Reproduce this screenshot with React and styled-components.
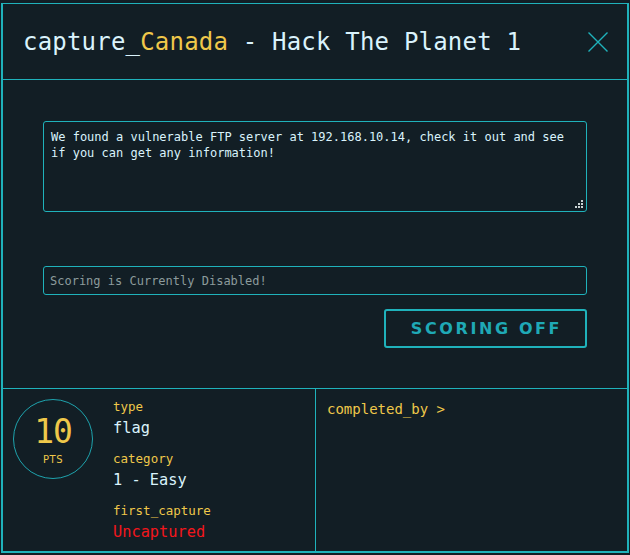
import styled, {createGlobalStyle} from 'styled-components';

const teal = '#1fb2bb';
const yellow = '#efc84a';
const light = '#daf3fc';
const bg = '#121e25';
const mono = '"DejaVu Sans Mono", "Liberation Mono", monospace';

const GlobalStyle = createGlobalStyle`
  html, body {
    margin: 0;
    background: ${bg};
  }
  * {
    box-sizing: border-box;
  }
`;

const Modal = styled.div`
  margin: 3px 0 0 1px;
  width: 628px;
  height: 550px;
  border: 2px solid ${teal};
  border-top-width: 1px;
  background: ${bg};
  display: flex;
  flex-direction: column;
  font-family: ${mono};
`;

const Header = styled.div`
  height: 76px;
  flex: none;
  display: flex;
  align-items: center;
  justify-content: space-between;
  padding: 0 19px 0 20px;
  border-bottom: 1px solid ${teal};
`;

const Title = styled.h1`
  margin: 0;
  font-size: 24px;
  font-weight: normal;
  letter-spacing: 0.2px;
  color: ${light};
  line-height: 30px;
`;

const Accent = styled.span`
  color: ${yellow};
`;

const CloseButton = styled.button`
  width: 20px;
  height: 20px;
  padding: 0;
  border: none;
  background: none;
  display: flex;
  cursor: pointer;
`;

const Body = styled.div`
  height: 309px;
  flex: none;
  display: flex;
  flex-direction: column;
  align-items: flex-end;
  padding: 41px 40px 0 40px;
  border-bottom: 1px solid ${teal};
`;

const AreaWrap = styled.div`
  position: relative;
  width: 100%;
  height: 91px;
`;

const TextArea = styled.textarea`
  display: block;
  width: 100%;
  height: 100%;
  resize: none;
  background: transparent;
  border: 1px solid ${teal};
  border-radius: 3px;
  padding: 7px 7px;
  font-family: ${mono};
  font-size: 12px;
  line-height: 16px;
  color: ${light};
  outline: none;
`;

const Grip = styled.svg`
  position: absolute;
  right: 3px;
  bottom: 3px;
  pointer-events: none;
`;

const FlagInput = styled.input`
  margin-top: 54px;
  width: 100%;
  height: 29px;
  background: transparent;
  border: 1px solid ${teal};
  border-radius: 3px;
  padding: 0 6px;
  font-family: ${mono};
  font-size: 12px;
  color: ${light};
  outline: none;

  &::placeholder {
    color: #8c9b9c;
  }
`;

const ScoreButton = styled.button`
  margin-top: 14px;
  width: 203px;
  height: 39px;
  background: transparent;
  border: 2px solid ${teal};
  border-radius: 3px;
  color: #1fa9b6;
  font-family: "DejaVu Sans", "Liberation Sans", sans-serif;
  font-size: 16px;
  font-weight: bold;
  letter-spacing: 2.6px;
  padding: 0 0 1px 2px;
  cursor: pointer;
`;

const Footer = styled.div`
  flex: 1;
  display: grid;
  grid-template-columns: 312px 1px 1fr;
`;

const Divider = styled.div`
  background: ${teal};
`;

const StatsCol = styled.div`
  display: flex;
  gap: 20px;
  padding: 10px;
`;

const Points = styled.div`
  width: 80px;
  height: 80px;
  flex: none;
  border: 1px solid #1ea3ad;
  border-radius: 50%;
  display: flex;
  flex-direction: column;
  align-items: center;
  padding-top: 15px;
  color: ${yellow};
`;

const PointValue = styled.div`
  font-size: 33px;
  line-height: 34px;
  letter-spacing: -1px;
`;

const PointUnit = styled.div`
  margin-top: 5px;
  font-family: "DejaVu Sans", sans-serif;
  font-size: 10px;
  letter-spacing: 0.5px;
`;

const Info = styled.div`
  display: flex;
  flex-direction: column;
  gap: 13px;
  padding-top: 0;
`;

const Field = styled.div`
  display: flex;
  flex-direction: column;
  gap: 3px;
`;

const Label = styled.div`
  font-size: 12.5px;
  line-height: 16px;
  color: ${yellow};
`;

const Value = styled.div`
  font-size: 15.3px;
  line-height: 20px;
  color: ${(p) => (p.$danger ? '#f2161c' : light)};
`;

const CompletedCol = styled.div`
  padding: 11px 11px;
`;

const CompletedLink = styled.div`
  font-size: 14px;
  line-height: 18px;
  color: ${yellow};
  cursor: pointer;
`;

const dots = [
  [8, 2],
  [5, 5],
  [8, 5],
  [2, 8],
  [5, 8],
  [8, 8],
];

const App = () => {
  return (
    <>
      <GlobalStyle />
      <Modal>
        <Header>
          <Title>
            capture_<Accent>Canada</Accent> - Hack The Planet 1
          </Title>
          <CloseButton aria-label="close">
            <svg width="20" height="20" viewBox="0 0 20 20">
              <path d="M0.5 0.5 L19.5 19.5 M19.5 0.5 L0.5 19.5" stroke={teal} strokeWidth="1.4" fill="none" />
            </svg>
          </CloseButton>
        </Header>
        <Body>
          <AreaWrap>
            <TextArea
              readOnly
              defaultValue="We found a vulnerable FTP server at 192.168.10.14, check it out and see if you can get any information!"
            />
            <Grip width="10" height="10" viewBox="0 0 10 10">
              {dots.map(([x, y]) => (
                <rect key={`${x}-${y}`} x={x - 1} y={y - 1} width="2" height="2" fill="#c9d2d3" />
              ))}
            </Grip>
          </AreaWrap>
          <FlagInput placeholder="Scoring is Currently Disabled!" disabled />
          <ScoreButton>SCORING OFF</ScoreButton>
        </Body>
        <Footer>
          <StatsCol>
            <Points>
              <PointValue>10</PointValue>
              <PointUnit>PTS</PointUnit>
            </Points>
            <Info>
              <Field>
                <Label>type</Label>
                <Value>flag</Value>
              </Field>
              <Field>
                <Label>category</Label>
                <Value>1 - Easy</Value>
              </Field>
              <Field>
                <Label>first_capture</Label>
                <Value $danger>Uncaptured</Value>
              </Field>
            </Info>
          </StatsCol>
          <Divider />
          <CompletedCol>
            <CompletedLink>completed_by &gt;</CompletedLink>
          </CompletedCol>
        </Footer>
      </Modal>
    </>
  );
};

export default App;
